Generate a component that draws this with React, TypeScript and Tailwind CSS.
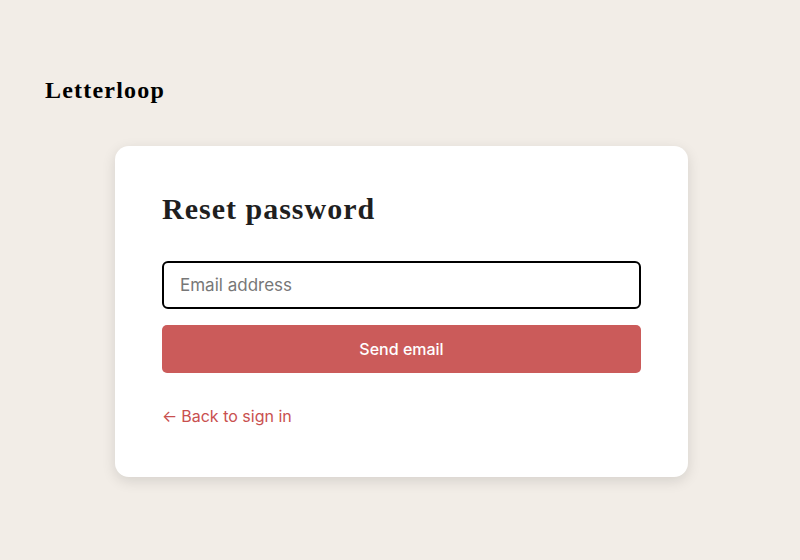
export default function App() {
  return (
    <div className="min-h-[560px] w-full bg-[#f2ede7] font-['Inter','Noto_Sans',sans-serif]">
      <header className="px-[45px] pt-[75px]">
        <span className="font-['Liberation_Serif','Times_New_Roman',serif] text-[24px] font-bold leading-[30px] tracking-[1.2px] text-black">
          Letterloop
        </span>
      </header>

      <div className="flex justify-center pt-[41px]">
        <div className="ml-[3px] w-[573px] rounded-[14px] bg-white px-[47px] pt-[44px] pb-[49px] shadow-[0_4px_14px_rgba(0,0,0,0.12)]">
          <h1 className="font-['Liberation_Serif','Times_New_Roman',serif] text-[30px] font-bold leading-[38px] tracking-[1px] text-[#1f1f1f]">
            Reset password
          </h1>

          <form className="mt-[33px] flex flex-col gap-4">
            <input
              type="email"
              placeholder="Email address"
              className="h-12 w-full rounded-[6px] border-2 border-black px-4 text-[17px] text-[#222] outline-none placeholder:text-[#777]"
            />
            <button
              type="button"
              className="h-12 w-full rounded-[5px] bg-[#cb5b5a] text-[16px] font-medium text-white"
            >
              Send email
            </button>
          </form>

          <a href="#" className="mt-[32px] inline-flex items-center gap-1 text-[16px] leading-[22px] text-[#c9504f]">
            <span>←</span>
            <span>Back to sign in</span>
          </a>
        </div>
      </div>
    </div>
  );
}
